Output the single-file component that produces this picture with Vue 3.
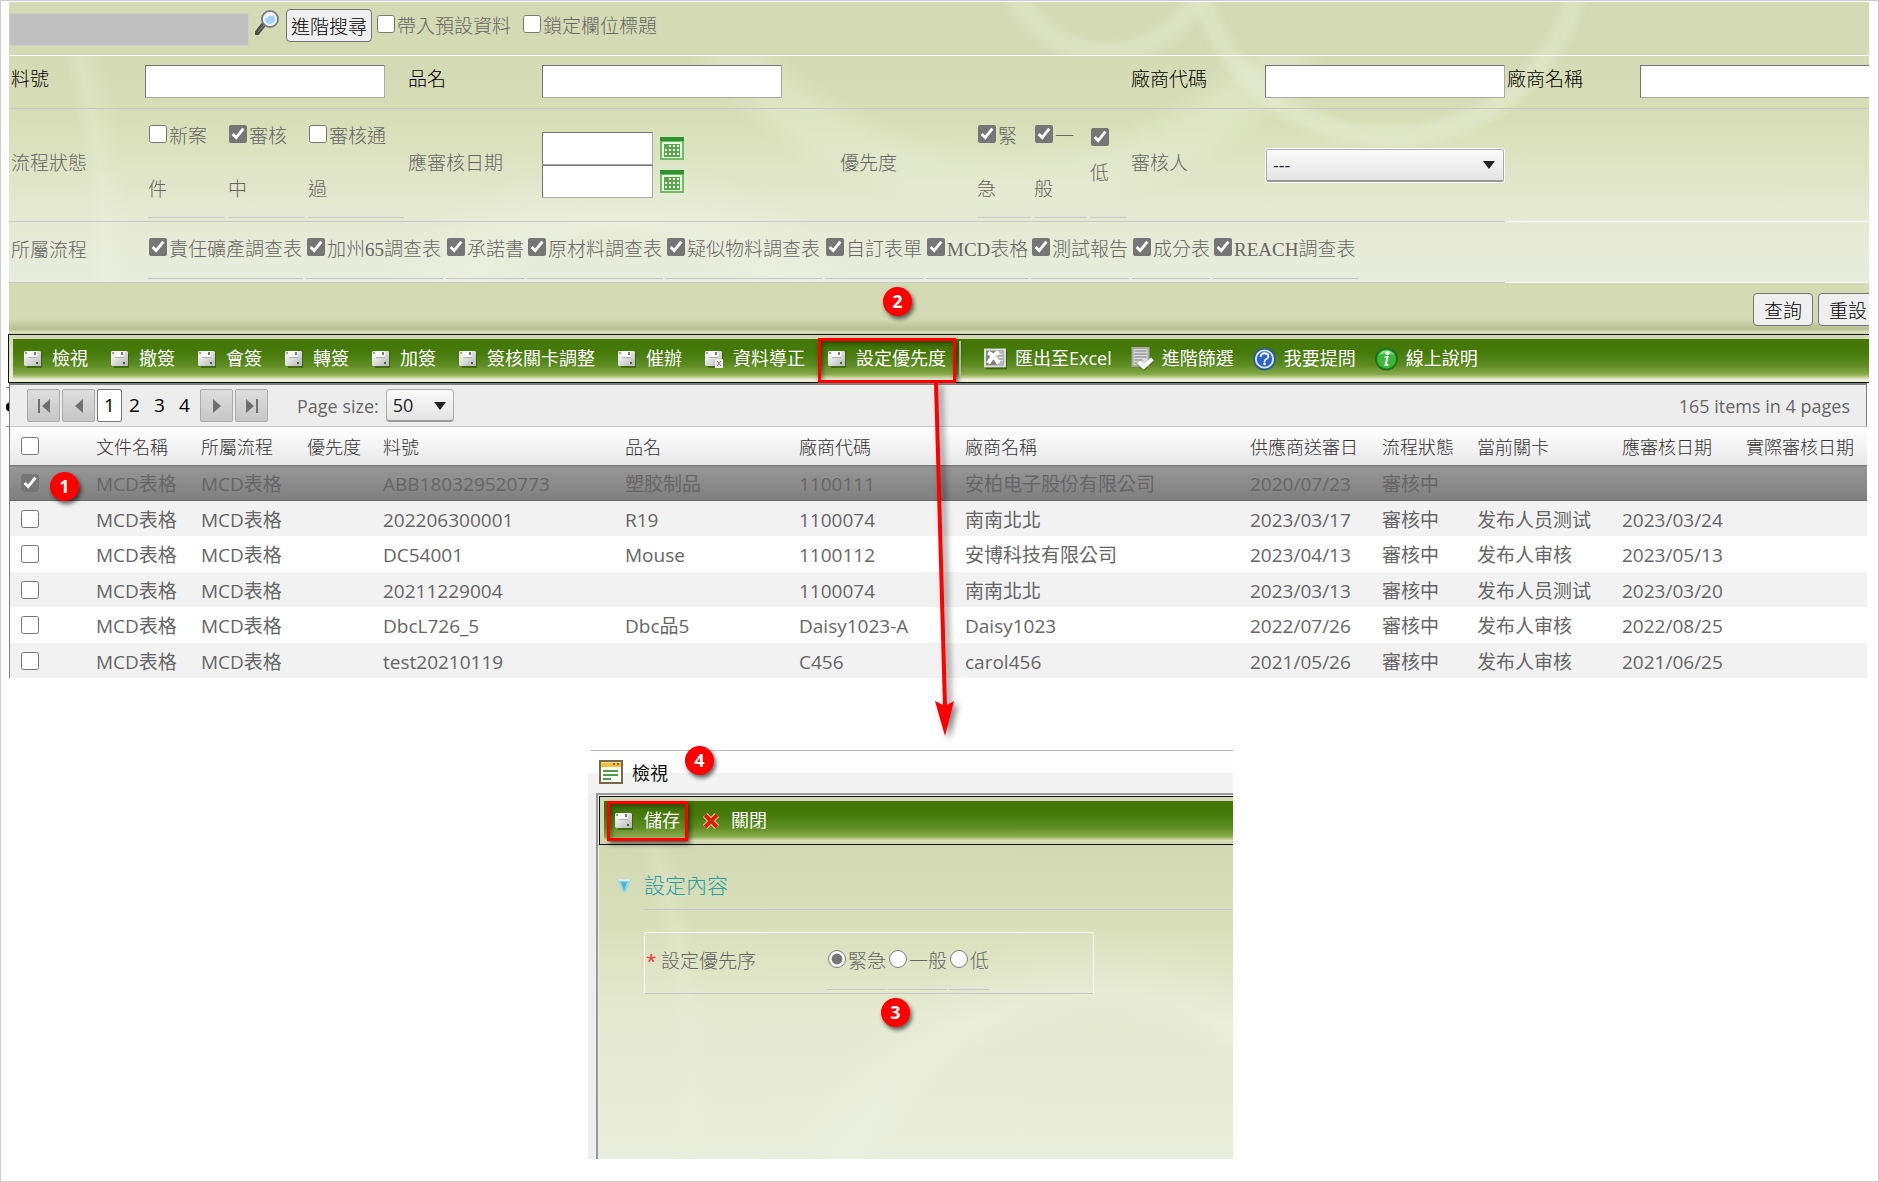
<script setup>
import { ref } from 'vue'

const states = [
  { id: 's1', first: '新案', rest: '件', on: false },
  { id: 's2', first: '審核', rest: '中', on: true },
  { id: 's3', first: '審核通', rest: '過', on: false },
]
const priorities = [
  { id: 'p1', first: '緊', rest: '急', on: true },
  { id: 'p2', first: '一', rest: '般', on: true },
  { id: 'p3', first: '', rest: '低', on: true },
]
const flows = [
  '責任礦產調查表', '加州65調查表', '承諾書', '原材料調查表', '疑似物料調查表',
  '自訂表單', 'MCD表格', '測試報告', '成分表', 'REACH調查表',
]
const saveActions = ['檢視', '撤簽', '會簽', '轉簽', '加簽', '簽核關卡調整', '催辦', '資料導正', '設定優先度']
const columns = [
  '文件名稱', '所屬流程', '優先度', '料號', '品名', '廠商代碼', '廠商名稱',
  '供應商送審日', '流程狀態', '當前關卡', '應審核日期', '實際審核日期',
]
const rows = [
  ['MCD表格', 'MCD表格', '', 'ABB180329520773', '塑胶制品', '1100111', '安柏电子股份有限公司', '2020/07/23', '審核中', '', '', ''],
  ['MCD表格', 'MCD表格', '', '202206300001', 'R19', '1100074', '南南北北', '2023/03/17', '審核中', '发布人员测试', '2023/03/24', ''],
  ['MCD表格', 'MCD表格', '', 'DC54001', 'Mouse', '1100112', '安博科技有限公司', '2023/04/13', '審核中', '发布人审核', '2023/05/13', ''],
  ['MCD表格', 'MCD表格', '', '20211229004', '', '1100074', '南南北北', '2023/03/13', '審核中', '发布人员测试', '2023/03/20', ''],
  ['MCD表格', 'MCD表格', '', 'DbcL726_5', 'Dbc品5', 'Daisy1023-A', 'Daisy1023', '2022/07/26', '審核中', '发布人审核', '2022/08/25', ''],
  ['MCD表格', 'MCD表格', '', 'test20210119', '', 'C456', 'carol456', '2021/05/26', '審核中', '发布人审核', '2021/06/25', ''],
]
const selected = ref([true, false, false, false, false, false])
const order = ref('緊急')
</script>

<template>
  <div class="page">
    <svg class="defs" width="0" height="0" aria-hidden="true">
      <defs>
        <linearGradient id="metal" x1="0" y1="0" x2="1" y2="1">
          <stop offset="0" stop-color="#ffffff" />
          <stop offset="0.5" stop-color="#dcdcdc" />
          <stop offset="1" stop-color="#b4b4b4" />
        </linearGradient>
        <symbol id="disk" viewBox="0 0 18 18">
          <path d="M2 3h16v15H3z" fill="#2d5206" opacity=".6" />
          <path d="M1 1h15l1 1v14H1L0 15V2z" fill="url(#metal)" />
          <path d="M4 1h9v6H4z" fill="#fbfbfb" />
          <path d="M4 7h9v1H4z" fill="#b0b0b0" />
          <path d="M1 2h2v2H1z" fill="#9f9f9f" />
          <path d="M10 2h2v3h-2z" fill="#777" />
          <path d="M12 12h2v2h-2z" fill="#47622f" />
        </symbol>
        <symbol id="calendar" viewBox="0 0 24 23">
          <path d="M0 0h24v23H0z" fill="#6fbd63" />
          <path d="M0 0h24v4H0z" fill="#2f9130" />
          <path d="M2 5h20v16H2z" fill="#eef8e9" />
          <path d="M4 7h16v13H4z" fill="#55a948" />
          <path d="M5 12h2v2H5zM9 12h2v2H9zM13 12h2v2h-2zM17 12h2v2h-2zM5 16h2v2H5zM9 16h2v2H9zM13 16h2v2h-2zM17 16h2v2h-2zM9 8h2v2H9zM13 8h2v2h-2zM17 8h2v2h-2z" fill="#fff" />
        </symbol>
      </defs>
    </svg>

    <main class="screen">
      <section class="search">
        <div class="top-row">
          <span class="blank"></span>
          <svg class="magnifier" viewBox="0 0 25 26" aria-hidden="true">
            <path d="M9 15l-7 9" stroke="#4a4a4a" stroke-width="5" stroke-linecap="round" />
            <path d="M9 16l-6 7" stroke="#9c9c9c" stroke-width="1" />
            <circle cx="15" cy="10" r="8" fill="#b9dcfb" stroke="#7a7c84" stroke-width="2" />
            <circle cx="15" cy="10" r="6" fill="#a5d0fa" stroke="#e9f2fb" stroke-width="2" />
            <path d="M11 9q2-5 7-3" fill="none" stroke="#fff" stroke-width="2" />
          </svg>
          <button class="btn adv" type="button">進階搜尋</button>
          <span class="tick"><input id="preset" type="checkbox" /><label for="preset">帶入預設資料</label></span>
          <span class="tick"><input id="lock" type="checkbox" /><label for="lock">鎖定欄位標題</label></span>
        </div>

        <div class="fields">
          <div class="line first">
            <label class="name" for="partno">料號</label>
            <div><input id="partno" class="text" type="text" /></div>
            <label class="name" for="product">品名</label>
            <div class="wide"><input id="product" class="text" type="text" /></div>
            <label class="name" for="vcode">廠商代碼</label>
            <div><input id="vcode" class="text" type="text" /></div>
            <label class="name" for="vname">廠商名稱</label>
            <div><input id="vname" class="text" type="text" /></div>
          </div>

          <div class="line second">
            <span class="name">流程狀態</span>
            <div class="opts states">
              <span v-for="s in states" :key="s.id" class="opt">
                <input :id="s.id" type="checkbox" :checked="s.on" /><label :for="s.id">{{ s.first }}<br />{{ s.rest }}</label>
              </span>
            </div>
            <span class="name">應審核日期</span>
            <div class="dates">
              <div><input class="text date" type="text" aria-label="應審核日期起" /><svg class="cal"><use href="#calendar" /></svg></div>
              <div><input class="text date" type="text" aria-label="應審核日期迄" /><svg class="cal"><use href="#calendar" /></svg></div>
            </div>
            <span class="name">優先度</span>
            <div class="opts prio">
              <span v-for="p in priorities" :key="p.id" class="opt" :class="{ tight: !p.first }">
                <input :id="p.id" type="checkbox" :checked="p.on" /><label :for="p.id">{{ p.first }}<br />{{ p.rest }}</label>
              </span>
            </div>
            <label class="name" for="reviewer">審核人</label>
            <div class="pick reviewer">
              <select id="reviewer"><option>---</option></select>
              <svg viewBox="0 0 12 8" aria-hidden="true"><path d="M0 0h12L6 8z" fill="#222" /></svg>
            </div>
            <span class="rest"></span>
          </div>

          <div class="line third">
            <span class="name">所屬流程</span>
            <div class="opts flows">
              <span v-for="(f, i) in flows" :key="f" class="opt">
                <input :id="'f' + i" type="checkbox" checked /><label :for="'f' + i">{{ f }}</label>
              </span>
            </div>
            <span class="rest"></span>
          </div>
        </div>

        <div class="submit">
          <button class="btn act" type="button">查詢</button>
          <button class="btn act" type="button">重設</button>
        </div>
      </section>

      <nav class="toolbar">
        <div class="bar">
          <button v-for="a in saveActions" :key="a" class="tool" type="button" :class="{ marked: a === '設定優先度' }">
            <svg class="ico18" viewBox="0 0 18 18" aria-hidden="true">
              <use href="#disk" />
              <g v-if="a === '資料導正'">
                <path d="M10 9h8v9h-8z" fill="#eee" />
                <path d="M12 11l4 5m0-5l-4 5" stroke="#777" stroke-width="1" />
              </g>
            </svg><span>{{ a }}</span>
          </button>
          <span class="sep"></span>
          <button class="tool big" type="button">
            <svg class="ico22" viewBox="0 0 22 22" aria-hidden="true">
              <path d="M2 3h20v18H2z" fill="#2d5206" opacity=".7" />
              <path d="M0 1h21v18H0z" fill="#dedede" />
              <path d="M2 3h17v14H2z" fill="#808080" />
              <path d="M12 3h7v14h-7z" fill="#b5b5b5" />
              <path d="M14 6h4v1h-4zM14 9h4v1h-4zM14 12h4v1h-4z" fill="#e8e8e8" />
              <path d="M4 5q6 3 10 10M14 4Q8 8 4 15" fill="none" stroke="#fff" stroke-width="4" />
            </svg><span>匯出至Excel</span>
          </button>
          <button class="tool big" type="button">
            <svg class="ico22" viewBox="0 0 22 24" aria-hidden="true">
              <path d="M0 0h18v20H0z" fill="#a8a8a8" />
              <path d="M2 2h14v16H2z" fill="#d8d8d8" />
              <path d="M3 4h12M3 7h12M3 10h12M3 13h8M3 16h5" stroke="#7d7d7d" stroke-width="1" />
              <path d="M7 16l5 5L21 13" fill="none" stroke="#2d5206" stroke-width="5" opacity=".5" />
              <path d="M7 15l5 5L21 12" fill="none" stroke="#fff" stroke-width="4" />
            </svg><span>進階篩選</span>
          </button>
          <button class="tool big" type="button">
            <svg class="ico22" viewBox="0 0 24 24" aria-hidden="true">
              <circle cx="12" cy="12" r="12" fill="#2a6288" />
              <circle cx="12" cy="12" r="9" fill="#2a62d8" stroke="#dbe8fb" stroke-width="2" />
              <path d="M8 10q0-4 4-4t4 3q0 2-2 3t-2 3" fill="none" stroke="#fff" stroke-width="2" />
              <circle cx="12" cy="17" r="1" fill="#fff" stroke="#fff" />
            </svg><span>我要提問</span>
          </button>
          <button class="tool big" type="button">
            <svg class="ico22" viewBox="0 0 24 24" aria-hidden="true">
              <circle cx="12" cy="12" r="12" fill="#23711e" />
              <circle cx="12" cy="12" r="10" fill="#3bb83b" />
              <path d="M4 8a9 9 0 0 1 16 0q-8-4-16 0" fill="#8be08a" />
              <path d="M10 10h3l-2 8h3" fill="none" stroke="#fff" stroke-width="2" />
              <circle cx="13" cy="6" r="2" fill="#fff" />
            </svg><span>線上說明</span>
          </button>
        </div>
      </nav>

      <section class="grid">
        <span class="handle"></span>
        <div class="pager">
          <button class="pg" type="button" aria-label="First page"><svg viewBox="0 0 16 16"><path d="M2 1h2v14H2zM14 1v14L6 8z" /></svg></button>
          <button class="pg" type="button" aria-label="Previous page"><svg viewBox="0 0 16 16"><path d="M12 1v14L4 8z" /></svg></button>
          <a class="num current" href="#">1</a><a class="num" href="#">2</a><a class="num" href="#">3</a><a class="num" href="#">4</a>
          <button class="pg next" type="button" aria-label="Next page"><svg viewBox="0 0 16 16"><path d="M4 1v14l8-7z" /></svg></button>
          <button class="pg" type="button" aria-label="Last page"><svg viewBox="0 0 16 16"><path d="M2 1v14l8-7zM12 1h2v14h-2z" /></svg></button>
          <label class="size" for="size">Page size:</label>
          <div class="pick small">
            <select id="size"><option>50</option></select>
            <svg viewBox="0 0 12 8" aria-hidden="true"><path d="M0 0h12L6 8z" fill="#222" /></svg>
          </div>
          <span class="total">165 items in 4 pages</span>
        </div>
        <table>
          <colgroup>
            <col class="c0" /><col class="c1" /><col class="c2" /><col class="c3" /><col class="c4" /><col class="c5" /><col class="c6" />
            <col /><col class="c8" /><col class="c9" /><col class="c10" /><col class="c11" /><col class="c12" />
          </colgroup>
          <thead>
            <tr>
              <th class="sel"><input type="checkbox" aria-label="全選" /></th>
              <th v-for="c in columns" :key="c">{{ c }}</th>
            </tr>
          </thead>
          <tbody>
            <tr v-for="(r, i) in rows" :key="r[3]" :class="{ picked: selected[i] }">
              <td class="sel"><input v-model="selected[i]" type="checkbox" :aria-label="r[3]" /></td>
              <td v-for="(c, j) in r" :key="j">{{ c }}</td>
            </tr>
          </tbody>
        </table>
      </section>
    </main>

    <section class="dialog">
      <header>
        <svg viewBox="0 0 24 24" aria-hidden="true">
          <path d="M1 1h22v22H1z" fill="#fdfdf6" stroke="#77694a" stroke-width="2" />
          <path d="M2 2h20v5H2z" fill="#f4bd3c" />
          <path d="M2 2h20v1H2z" fill="#fbe08a" />
          <path d="M14 3h2v2h-2zM18 3h2v2h-2z" fill="#a0641a" />
          <path d="M4 11h15M4 15h15M4 19h8" stroke="#4c9d4d" stroke-width="2" />
        </svg>
        <h2>檢視</h2>
      </header>
      <div class="frame">
        <nav class="toolbar">
          <div class="bar dbar">
            <button class="tool marked" type="button"><svg class="ico18" aria-hidden="true"><use href="#disk" /></svg><span>儲存</span></button>
            <button class="tool" type="button">
              <svg class="ico18" viewBox="0 0 18 18" aria-hidden="true">
                <path d="M3 3l12 12M15 3L3 15" stroke="#f8d9a8" stroke-width="6" />
                <path d="M3 3l12 12M15 3L3 15" stroke="#d8220f" stroke-width="4" />
              </svg><span>關閉</span>
            </button>
          </div>
        </nav>
        <div class="content">
          <div class="title-row">
            <svg viewBox="0 0 14 14" aria-hidden="true">
              <path d="M0 1h14L9 14H6z" fill="#8fd8e8" />
              <path d="M4 4h6l-3 9z" fill="#4fb3cf" />
              <path d="M1 2h12" stroke="#c9eef5" stroke-width="2" />
            </svg>
            <h3>設定內容</h3>
          </div>
          <div class="setting">
            <span class="star">*</span>
            <span class="caption">設定優先序</span>
            <span v-for="o in ['緊急', '一般', '低']" :key="o" class="opt">
              <input :id="'o' + o" v-model="order" type="radio" name="order" :value="o" /><label :for="'o' + o">{{ o }}</label>
            </span>
          </div>
        </div>
      </div>
    </section>

    <svg class="arrow" viewBox="0 0 40 360" aria-hidden="true">
      <path d="M12 0L21 325" stroke="#f00" stroke-width="4" />
      <path d="M11 319l10 5 9-5-9 35z" fill="#f00" />
    </svg>
    <span class="badge b1">1</span>
    <span class="badge b2">2</span>
    <span class="badge b3">3</span>
    <span class="badge b4">4</span>
  </div>
</template>

<style>
body {
  background: #fff;
}
</style>

<style scoped>
.page {
  position: relative;
  box-sizing: border-box;
  min-height: 100vh;
  padding: 1px 9px 21px 8px;
  border: 1px solid #ccc;
  overflow: hidden;
  color: #666;
  font-family: "Open Sans", "Noto Sans CJK TC", sans-serif;
  font-size: 19px;
  font-weight: 300;
}
.page *,
.page *::before,
.page *::after {
  box-sizing: border-box;
}
.defs {
  position: absolute;
}
button,
select,
input {
  margin: 0;
  font: inherit;
}
input[type="checkbox"],
input[type="radio"] {
  width: 18px;
  height: 18px;
  accent-color: #767676;
}

/* search form */
.search {
  overflow: hidden;
  background: #d4dab4;
  font-family: "Liberation Serif", "Noto Sans CJK TC", serif;
}
.top-row {
  display: flex;
  align-items: flex-start;
  height: 54px;
  padding-top: 7px;
  border-bottom: 1px solid #fff;
  background:
    radial-gradient(circle at 1098px -50px, transparent 85px, rgba(226, 233, 205, 0.5) 95px, rgba(226, 233, 205, 0.5) 105px, transparent 118px),
    radial-gradient(circle at 1380px -60px, transparent 180px, rgba(226, 233, 205, 0.5) 190px, rgba(226, 233, 205, 0.5) 200px, transparent 210px),
    #d4dab4;
}
.blank {
  width: 240px;
  height: 33px;
  margin: 4px 6px 0 0;
  border: 1px solid #d0d0c8;
  background: #c0c0c0;
}
.magnifier {
  width: 25px;
  height: 26px;
  margin-right: 6px;
}
.btn {
  height: 33px;
  padding: 0;
  border: 1px solid #767676;
  border-radius: 4px;
  background: #efefef;
  color: #000;
}
.adv {
  width: 86px;
  margin-right: 5px;
}
.tick {
  display: flex;
  gap: 2px;
  width: 146px;
  height: 36px;
  line-height: 36px;
}
.tick input {
  margin-top: 6px;
}
.fields {
  background:
    radial-gradient(circle at 1000px -230px, transparent 320px, rgba(236, 241, 220, 0.3) 345px, rgba(236, 241, 220, 0.3) 370px, transparent 395px),
    radial-gradient(circle at 1380px -114px, transparent 180px, rgba(230, 236, 210, 0.5) 190px, rgba(230, 236, 210, 0.5) 200px, transparent 210px),
    radial-gradient(circle at 610px 400px, transparent 210px, rgba(240, 243, 230, 0.4) 235px, transparent 300px),
    radial-gradient(circle at -620px 190px, transparent 700px, rgba(240, 243, 228, 0.25) 715px, transparent 740px),
    linear-gradient(#d4dab4, #d8dfb8 30%, #e6ead4 72%, #e8ecdc);
}
.line {
  display: grid;
  grid-template-columns: 136px 261px 136px 296px 139px 152px 136px 240px 135px 1fr;
  align-items: start;
  border-bottom: 1px solid #c8c8c8;
}
.name {
  padding-left: 2px;
}
.first {
  height: 53px;
  color: #000;
}
.first .name {
  line-height: 48px;
}
.first > div {
  min-width: 0;
  padding-top: 9px;
}
.wide {
  grid-column: span 3;
}
.text {
  display: block;
  width: 240px;
  height: 33px;
  border: 1px solid #aaa;
  border-top-color: #767676;
  border-left-color: #767676;
  background: #fff;
}
.second,
.third {
  grid-template-columns: 136px 261px 136px 296px 139px 152px 136px 240px 1fr;
  border-bottom: 0;
}
.second > *,
.third > * {
  align-self: stretch;
  border-bottom: 1px solid #c8c8c8;
}
.second {
  height: 113px;
}
.second .name {
  line-height: 110px;
}
.third {
  height: 61px;
}
.third .name {
  line-height: 57px;
}
.second .rest,
.third .rest {
  grid-column: 9;
  border-color: #fff;
}
.opts {
  display: grid;
  gap: 3px;
  align-content: start;
  padding-left: 3px;
}
.opts .opt {
  padding-top: 1px;
  border-bottom: 1px solid #c8c8c8;
  line-height: 53px;
  white-space: nowrap;
}
.opt input {
  margin: 0 2px 0 1px;
  vertical-align: 0;
}
.states {
  grid-template-columns: 77px 77px 96px;
}
.prio {
  grid-template-columns: 54px 53px 37px;
  padding-left: 0;
}
.states .opt,
.prio .opt {
  height: 109px;
}
.prio .tight {
  padding-top: 14px;
  line-height: 34px;
}
.flows {
  grid-column: 2 / 9;
  grid-template-columns: 155px 137px 78px 136px 156px 98px 102px 98px 78px 145px;
}
.flows .opt {
  height: 57px;
}
.dates {
  display: flex;
  flex-direction: column;
  padding-top: 23px;
}
.dates > div {
  display: flex;
  align-items: center;
  gap: 7px;
}
.date {
  width: 111px;
}
.cal {
  width: 24px;
  height: 23px;
}
.pick {
  position: relative;
}
.pick select {
  width: 100%;
  height: 33px;
  padding: 0 6px;
  border: 1px solid #aaa;
  border-bottom: 2px solid #999;
  border-radius: 4px;
  appearance: none;
  background: linear-gradient(#fafafa, #e4e4e4);
  color: #222;
  font-family: "Open Sans", sans-serif;
  font-size: 18px;
  font-weight: 400;
}
.pick svg {
  position: absolute;
  right: 8px;
  top: 13px;
  width: 12px;
  height: 8px;
  pointer-events: none;
}
.pick.reviewer {
  padding: 40px 1px 0;
}
.pick.reviewer select {
  border-radius: 2px;
  outline: 1px solid #fff;
}
.pick.reviewer svg {
  right: 10px;
  top: 52px;
}
.submit {
  display: flex;
  justify-content: flex-end;
  gap: 5px;
  height: 51px;
  margin-right: -9px;
  padding-top: 10px;
  background: linear-gradient(#d4dab4 70%, #b8be90 92%, #d4dab4 94%);
}
.act {
  flex: none;
  width: 60px;
}

/* toolbars */
.toolbar {
  margin-left: -1px;
  padding: 4px 0 3px 4px;
  border: 1px solid #111;
  border-right: 0;
  background: linear-gradient(#d4d8b6, #eceedd);
}
.bar {
  display: flex;
  align-items: center;
  height: 40px;
  padding-left: 11px;
  background: linear-gradient(#437607, #467a0b 35%, #5d8c22 65%, #86a94a 88%, #bccb8c 95%, #e4eac4);
}
.tool {
  position: relative;
  display: flex;
  align-items: center;
  flex: none;
  gap: 10px;
  height: 40px;
  margin-right: 23px;
  padding: 0;
  border: 0;
  background: none;
  color: #fff;
  font-size: 18px;
  font-weight: 400;
  white-space: nowrap;
}
.tool span {
  line-height: 26px;
  padding-bottom: 2px;
}
.marked {
  margin-right: 13px;
}
.marked::after {
  content: "";
  position: absolute;
  inset: -1px -10px -4px -10px;
  border: 3px solid #f00;
  box-shadow: 2px 3px 5px rgba(0, 0, 0, 0.6), inset 2px 3px 5px rgba(0, 0, 0, 0.4);
}
.big {
  gap: 8px;
  margin-right: 19px;
}
.ico18 {
  width: 18px;
  height: 18px;
}
.ico22 {
  width: 23px;
  height: 24px;
}
.sep {
  width: 2px;
  height: 36px;
  margin-right: 23px;
  background: #c9d3b4;
}

/* result grid */
.grid {
  position: relative;
  margin-right: 2px;
  border-top: 2px solid #808080;
  border-left: 1px solid #808080;
}
.handle {
  position: absolute;
  left: -4px;
  top: 2px;
  width: 3px;
  height: 40px;
  border: solid #888;
  border-width: 1px 0;
  background: radial-gradient(circle at 4px 19px, #000 4px, #fff 5px);
}
.pager {
  display: flex;
  align-items: center;
  height: 42px;
  padding: 0 16px 0 17px;
  border-right: 1px solid #808080;
  border-bottom: 1px solid #c8c8c8;
  background: #ededed;
  font-weight: 390;
}
.pg {
  display: flex;
  align-items: center;
  justify-content: center;
  width: 33px;
  height: 33px;
  margin-right: 2px;
  padding: 0;
  border: 1px solid #aaa;
  border-radius: 2px;
  background: linear-gradient(#dedede, #c6c6c6);
}
.pg svg {
  width: 16px;
  height: 16px;
  fill: #707070;
}
.num {
  width: 25px;
  color: #000;
  line-height: 31px;
  text-align: center;
  text-decoration: none;
}
.current {
  height: 33px;
  border: 1px solid #777;
  border-radius: 2px;
  background: #fff;
}
.next {
  margin-left: 3px;
}
.size {
  margin: 0 7px 0 27px;
  font-size: 18px;
}
.small {
  width: 68px;
}
.total {
  margin-left: auto;
  font-size: 18px;
}
table {
  width: 100%;
  border-collapse: collapse;
  table-layout: fixed;
}
.c0 { width: 78px; }
.c1 { width: 105px; }
.c2 { width: 106px; }
.c3 { width: 76px; }
.c4 { width: 242px; }
.c5 { width: 174px; }
.c6 { width: 166px; }
.c8 { width: 132px; }
.c9 { width: 95px; }
.c10 { width: 145px; }
.c11 { width: 124px; }
.c12 { width: 129px; }
th,
td {
  padding: 0 0 0 8px;
  line-height: 26px;
  text-align: left;
  white-space: nowrap;
}
td {
  padding-top: 2px;
  font-weight: 390;
}
th {
  padding-top: 1px;
  color: #333;
  font-size: 18px;
  font-weight: 300;
}
thead tr {
  height: 38px;
  background: linear-gradient(#fff, #e8e8e8);
}
tbody tr {
  height: 36px;
  background: #f2f2f2;
}
tbody tr:nth-child(even) {
  height: 35px;
}
tbody tr:nth-child(odd) {
  background: #fff;
}
tbody tr:nth-child(even) {
  background: #f2f2f2;
}
tbody tr.picked {
  background: linear-gradient(#707070, #969696 6%, #7f7f7f 96%, #606060);
}
.sel {
  padding: 0 0 0 11px;
}
.sel input {
  display: block;
}

/* dialog */
.dialog {
  width: 645px;
  margin: 72px 0 0 579px;
  border-top: 1px solid #b9b9b9;
  border-top-left-radius: 4px;
  background: #eee;
}
.dialog header {
  display: flex;
  align-items: center;
  gap: 9px;
  height: 42px;
  padding-left: 11px;
  background: linear-gradient(#fefefe 52%, #f3f3f3 52%);
}
.dialog header svg {
  width: 24px;
  height: 24px;
}
.dialog h2 {
  margin: 0;
  color: #111;
  font-size: 18px;
  font-weight: 400;
}
.frame {
  margin-left: 8px;
  padding: 1px 0 0 2px;
  border-top: 2px solid #999;
  border-left: 2px solid #999;
}
.frame .toolbar {
  background: #d4d8b6;
}
.frame .tool {
  gap: 11px;
}
.dbar {
  padding-left: 11px;
}
.frame .marked {
  margin-right: 22px;
}
.frame .marked::after {
  inset: 0 -8px 0 -8px;
}
.content {
  height: 314px;
  margin-left: -1px;
  padding: 15px 0 0 18px;
  background:
    radial-gradient(circle at 500px 420px, transparent 240px, rgba(240, 243, 230, 0.35) 270px, transparent 330px),
    radial-gradient(circle at -620px 230px, transparent 695px, rgba(238, 241, 222, 0.2) 712px, transparent 730px),
    linear-gradient(#d3d9b3, #d9dfba 25%, #e6ead3 56%, #e9eddb);
}
.title-row {
  display: flex;
  align-items: center;
  gap: 13px;
}
.title-row svg {
  width: 14px;
  height: 14px;
}
.title-row h3 {
  flex: 1;
  height: 50px;
  margin: 0;
  border-bottom: 1px solid #c8c8c8;
  color: #2a9fa5;
  font-size: 21px;
  font-weight: 300;
  line-height: 50px;
}
.setting {
  display: flex;
  width: 450px;
  height: 62px;
  margin: 22px 0 0 27px;
  padding-left: 1px;
  border: 1px solid #fff;
  border-bottom-color: #c8c8c8;
  line-height: 57px;
}
.star {
  width: 15px;
  color: #f33;
  font-weight: 400;
}
.caption {
  width: 166px;
}
.setting .opt {
  height: 57px;
  margin-right: 2px;
  border-bottom: 1px solid #c8c8c8;
}

/* annotations over the screen */
.arrow {
  position: absolute;
  left: 923px;
  top: 381px;
  width: 40px;
  height: 360px;
  filter: drop-shadow(4px 3px 3px rgba(0, 0, 0, 0.5));
}
.badge {
  position: absolute;
  width: 29px;
  height: 29px;
  border-radius: 50%;
  background: #f00;
  box-shadow: 2px 3px 4px rgba(0, 0, 0, 0.6);
  color: #fff;
  font-size: 18px;
  font-weight: 700;
  line-height: 29px;
  text-align: center;
}
.b1 { left: 49px; top: 471px; }
.b2 { left: 882px; top: 286px; }
.b3 { left: 880px; top: 997px; }
.b4 { left: 684px; top: 745px; }
</style>
